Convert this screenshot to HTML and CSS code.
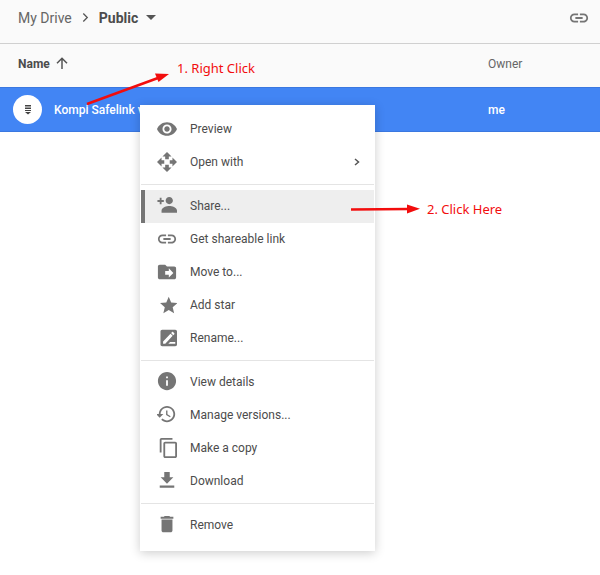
FILE: index.html
```html
<!DOCTYPE html>
<html lang="en">
<head>
  <meta charset="UTF-8">
  <meta name="viewport" content="width=device-width, initial-scale=1.0">
  <title>Public - My Drive</title>
  <link rel="stylesheet" href="styles.css">
</head>
<body>

<header class="toolbar">
  <nav class="breadcrumb">
    <a href="#">My Drive</a>
    <svg class="crumb-sep" viewBox="0 0 8 12"><path d="M1.5 1.5L6 6l-4.500 4.500"/></svg>
    <button class="current">Public
      <svg class="caret" viewBox="0 0 10 5"><path d="M0 0h10L5 5z"/></svg>
    </button>
  </nav>
  <button class="link-btn" aria-label="Get shareable link">
    <svg class="icon" viewBox="1 1 22 22"><path d="M3.900 12c0-1.710 1.390-3.100 3.100-3.100h4V7H7c-2.760 0-5 2.240-5 5s2.240 5 5 5h4v-1.900H7c-1.710 0-3.100-1.390-3.100-3.100zM8 13h8v-2H8v2zm9-6h-4v1.900h4c1.710 0 3.100 1.390 3.100 3.100s-1.390 3.100-3.100 3.100h-4V17h4c2.760 0 5-2.240 5-5s-2.240-5-5-5z"/></svg>
  </button>
</header>

<main>
  <table class="files">
    <thead>
      <tr>
        <th class="name-head">Name
          <svg class="sort" viewBox="0 0 12 12"><path d="M6 12V1.500M1 6.300L6 1.300l5 5"/></svg>
        </th>
        <th class="owner">Owner</th>
      </tr>
    </thead>
    <tbody>
      <tr class="selected">
        <td>
          <div class="file">
            <span class="file-icon">
              <svg viewBox="0 0 8 10"><path d="M1 0h6v1.500H1zM1 2.500h6V4H1zM1 5h6v1H1zM1 7h6L4 9.500z"/></svg>
            </span>
            <span>Kompi Safelink v</span>
          </div>
        </td>
        <td class="owner">me</td>
      </tr>
    </tbody>
  </table>
</main>

<div class="menu">
  <button class="item">
    <svg class="icon" viewBox="1 1 22 22"><path d="M12 4.500C7 4.500 2.730 7.610 1 12c1.730 4.390 6 7.500 11 7.500s9.270-3.110 11-7.500c-1.730-4.390-6-7.500-11-7.500zM12 17c-2.760 0-5-2.240-5-5s2.240-5 5-5 5 2.240 5 5-2.240 5-5 5zm0-8c-1.660 0-3 1.340-3 3s1.340 3 3 3 3-1.340 3-3-1.340-3-3-3z"/></svg>
    <span>Preview</span>
  </button>
  <button class="item">
    <svg class="icon" viewBox="1 1 22 22"><path d="M10 9h4V6h3l-5-5-5 5h3v3zm-1 1H6V7l-5 5 5 5v-3h3v-4zm14 2l-5-5v3h-3v4h3v3l5-5zm-9 3h-4v3H7l5 5 5-5h-3v-3z"/></svg>
    <span>Open with</span>
    <svg class="more" viewBox="0 0 6 8"><path d="M1 1l3.500 3L1 7"/></svg>
  </button>
  <hr>
  <button class="item active">
    <svg class="icon" viewBox="1 2 22 22"><path d="M14.500 11c2.210 0 4-1.790 4-4s-1.790-4-4-4-4 1.790-4 4 1.790 4 4 4zM6 6.500V4H4v2.500H1.500v2H4V11h2V8.500h2.500v-2zM14.500 13c-2.670 0-8.500 1.340-8.500 5v2.500h17V18c0-3.660-5.830-5-8.500-5z"/></svg>
    <span>Share...</span>
  </button>
  <button class="item">
    <svg class="icon" viewBox="1 1 22 22"><path d="M3.900 12c0-1.710 1.390-3.100 3.100-3.100h4V7H7c-2.760 0-5 2.240-5 5s2.240 5 5 5h4v-1.900H7c-1.710 0-3.100-1.390-3.100-3.100zM8 13h8v-2H8v2zm9-6h-4v1.900h4c1.710 0 3.100 1.390 3.100 3.100s-1.390 3.100-3.100 3.100h-4V17h4c2.760 0 5-2.240 5-5s-2.240-5-5-5z"/></svg>
    <span>Get shareable link</span>
  </button>
  <button class="item">
    <svg class="icon" viewBox="1 1 22 22"><path d="M20 6h-8l-2-2H4c-1.100 0-2 .9-2 2v12c0 1.100.9 2 2 2h16c1.100 0 2-.9 2-2V8c0-1.100-.9-2-2-2zm-6 12v-3h-4v-4h4V8l5 5-5 5z"/></svg>
    <span>Move to...</span>
  </button>
  <button class="item">
    <svg class="icon" viewBox="-1 0 22 23"><path d="M12 17.270L18.180 21l-1.640-7.030L22 9.240l-7.190-.61L12 2 9.190 8.630 2 9.240l5.460 4.730L5.820 21z"/></svg>
    <span>Add star</span>
  </button>
  <button class="item">
    <svg class="icon" viewBox="-2 0 23 23"><path fill-rule="evenodd" d="M4 2h15c1.100 0 2 .9 2 2v15c0 1.100-.9 2-2 2H4c-1.100 0-2-.9-2-2V4c0-1.100.9-2 2-2zM5 15.500V18h2.500l8.500-9-2.500-2.500zM14.200 5.800l2.500 2.500 1.200-1.200c.3-.3.3-.7 0-1L16.400 4.600c-.3-.3-.7-.3-1 0zM11 18h8v-2h-6z"/></svg>
    <span>Rename...</span>
  </button>
  <hr>
  <button class="item">
    <svg class="icon" viewBox="1 2 22 22"><path d="M12 2C6.480 2 2 6.480 2 12s4.480 10 10 10 10-4.480 10-10S17.520 2 12 2zm1 15h-2v-6h2v6zm0-8h-2V7h2v2z"/></svg>
    <span>View details</span>
  </button>
  <button class="item">
    <svg class="icon" viewBox="2 2 22 22"><path d="M13 3c-4.970 0-9 4.030-9 9H1l3.890 3.890.07.14L9 12H6c0-3.870 3.130-7 7-7s7 3.130 7 7-3.130 7-7 7c-1.930 0-3.680-.79-4.940-2.060l-1.420 1.420C8.270 19.990 10.510 21 13 21c4.970 0 9-4.030 9-9s-4.030-9-9-9zm-1 5v5l4.280 2.540.72-1.210-3.500-2.080V8H12z"/></svg>
    <span>Manage versions...</span>
  </button>
  <button class="item">
    <svg class="icon" viewBox="-1 1 22 22"><path d="M16 1H4c-1.100 0-2 .9-2 2v14h2V3h12V1zm3 4H8c-1.100 0-2 .9-2 2v14c0 1.100.9 2 2 2h11c1.100 0 2-.9 2-2V7c0-1.100-.9-2-2-2zm0 16H8V7h11v14z"/></svg>
    <span>Make a copy</span>
  </button>
  <button class="item">
    <svg class="icon" viewBox="1 2 22 22"><path d="M19 9h-4V3H9v6H5l7 7 7-7zM4 18v2.500h16V18z"/></svg>
    <span>Download</span>
  </button>
  <hr>
  <button class="item">
    <svg class="icon" viewBox="1 2 22 22"><path d="M6 19c0 1.100.9 2 2 2h8c1.100 0 2-.9 2-2V7H6v12zM19 4h-3.500l-1-1h-5l-1 1H5v2h14V4z"/></svg>
    <span>Remove</span>
  </button>
</div>

<!-- step notes drawn over the page -->
<svg class="arrow arrow-one" viewBox="0 0 84 34"><path class="line" d="M1 32L72 6"/><path d="M83 2L69 1.500l3.500 8.500z"/></svg>
<p class="note note-one">1. Right Click</p>
<svg class="arrow arrow-two" viewBox="0 0 70 10"><path class="line" d="M0 5.500L58 5"/><path d="M69 4.800L56 .5v9z"/></svg>
<p class="note note-two">2. Click Here</p>

</body>
</html>
```
FILE: styles.css
```css
* {
  box-sizing: border-box;
}

body {
  position: relative;
  min-height: 100vh;
  margin: 0;
  font-family: Roboto, "Liberation Sans", sans-serif;
  font-size: 12px;
  color: #4c4c4c;
  background-color: #fff;
}

button {
  margin: 0;
  padding: 0;
  border: none;
  background: none;
  font: inherit;
  color: inherit;
}

svg {
  display: block;
  flex: none;
}

.icon {
  width: 20px;
  height: 20px;
  fill: #757575;
}

.toolbar {
  display: flex;
  align-items: center;
  justify-content: space-between;
  height: 44px;
  padding: 0 11px 8px 18px;
  background-color: #fafafa;
  border-bottom: 1px solid #d0d0d0;
}

.breadcrumb {
  display: flex;
  align-items: center;
  gap: 10px;
  font-size: 14px;
}

.breadcrumb a {
  color: #666;
  text-decoration: none;
}

.crumb-sep {
  width: 7px;
  height: 11px;
}

.crumb-sep path,
.sort path,
.more path {
  fill: none;
  stroke: #555;
  stroke-width: 1.5;
}

.current {
  display: flex;
  align-items: center;
  gap: 8px;
  font-weight: bold;
}

.caret {
  width: 10px;
  height: 5px;
  fill: #555;
}

.files {
  width: 100%;
  border-collapse: collapse;
  table-layout: fixed;
}

.files th {
  height: 43px;
  padding: 0 0 2px;
  text-align: left;
  background-color: #fafafa;
}

.files .name-head {
  padding-left: 18px;
}

.files .owner {
  width: 112px;
}

th.owner {
  font-weight: normal;
  color: #666;
}

.sort {
  display: inline-block;
  width: 12px;
  height: 12px;
  margin-left: 3px;
  vertical-align: -1px;
}

.files td {
  height: 44px;
  padding: 1px 0 0;
}

.selected {
  color: #fff;
  font-weight: 500;
  background-color: #4285f4;
  border-top: 1px solid #3b78e0;
  border-bottom: 1px solid #3b78e0;
}

.file {
  display: flex;
  align-items: center;
  gap: 12px;
  padding-left: 13px;
}

.file-icon {
  display: flex;
  align-items: center;
  justify-content: center;
  width: 29px;
  height: 29px;
  border-radius: 50%;
  background-color: #fff;
}

.file-icon svg {
  width: 8px;
  height: 10px;
  fill: #444;
}

.menu {
  position: absolute;
  top: 105px;
  left: 140px;
  width: 235px;
  padding: 8px 1px 9px;
  background-color: #fff;
  box-shadow: 0 2px 10px rgba(0, 0, 0, 0.2);
}

.menu hr {
  height: 1px;
  margin: 5px 0;
  border: none;
  background-color: #e4e4e4;
}

.item {
  display: flex;
  align-items: center;
  gap: 13px;
  width: 100%;
  height: 33px;
  padding: 0 14px 2px 12px;
  border-left: 4px solid transparent;
  text-align: left;
}

.item.active {
  background-color: #eee;
  border-left-color: #757575;
}

.more {
  width: 6px;
  height: 8px;
  margin-left: auto;
}

.arrow {
  position: absolute;
  fill: #f20d0d;
}

.arrow .line {
  stroke: #f20d0d;
  stroke-width: 2.5;
}

.arrow-one {
  top: 72px;
  left: 86px;
  width: 84px;
  height: 34px;
}

.arrow-two {
  top: 204px;
  left: 351px;
  width: 70px;
  height: 10px;
}

.note {
  position: absolute;
  margin: 0;
  font-family: "Noto Sans", sans-serif;
  font-size: 13px;
  line-height: 16px;
  color: #f20d0d;
}

.note-one {
  top: 60px;
  left: 177px;
}

.note-two {
  top: 201px;
  left: 427px;
}
```
